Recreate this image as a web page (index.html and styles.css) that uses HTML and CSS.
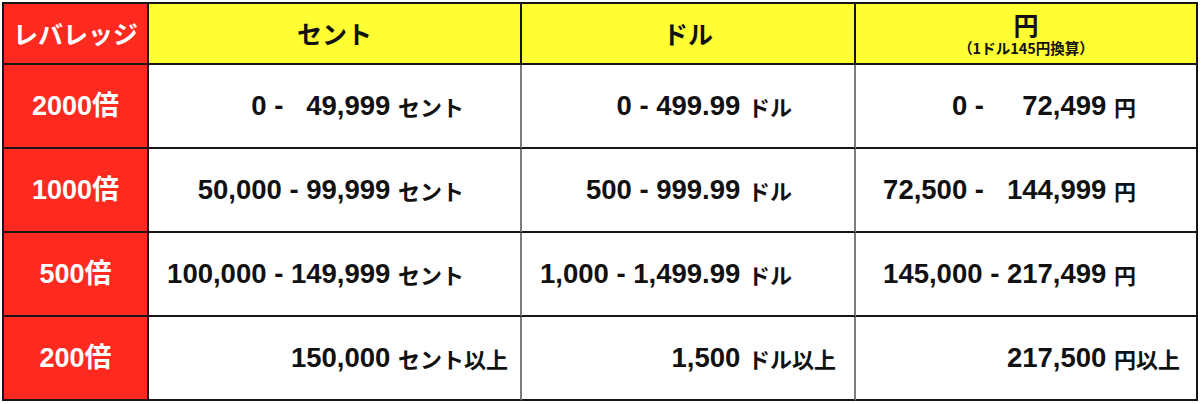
FILE: index.html
```html
<!DOCTYPE html>
<html lang="ja">
<head>
<meta charset="utf-8">
<title>レバレッジ</title>
<link rel="stylesheet" href="styles.css">
</head>
<body>
<div class="sheet">
  <div class="cell head lev">レバレッジ</div>
  <div class="cell head">セント</div>
  <div class="cell head">ドル</div>
  <div class="cell head yen-head"><span class="yen-title">円</span><span class="yen-sub">（1ドル145円換算）</span></div>

  <div class="cell lev">2000倍</div>
  <div class="cell val c-cent">0 -   49,999 <span class="unit">セント　　</span></div>
  <div class="cell val c-usd">0 - 499.99 <span class="unit">ドル　　</span></div>
  <div class="cell val c-jpy">0 -     72,499 <span class="unit">円　　</span></div>

  <div class="cell lev">1000倍</div>
  <div class="cell val c-cent">50,000 - 99,999 <span class="unit">セント　　</span></div>
  <div class="cell val c-usd">500 - 999.99 <span class="unit">ドル　　</span></div>
  <div class="cell val c-jpy">72,500 -   144,999 <span class="unit">円　　</span></div>

  <div class="cell lev">500倍</div>
  <div class="cell val c-cent">100,000 - 149,999 <span class="unit">セント　　</span></div>
  <div class="cell val c-usd">1,000 - 1,499.99 <span class="unit">ドル　　</span></div>
  <div class="cell val c-jpy">145,000 - 217,499 <span class="unit">円　　</span></div>

  <div class="cell lev">200倍</div>
  <div class="cell val c-cent">150,000 <span class="unit">セント以上</span></div>
  <div class="cell val c-usd">1,500 <span class="unit">ドル以上</span></div>
  <div class="cell val c-jpy">217,500 <span class="unit">円以上</span></div>
</div>
</body>
</html>
```

FILE: styles.css
```css
html, body {
  margin: 0;
  padding: 0;
  background: #ffffff;
}

body {
  padding: 2px;
  font-family: "Liberation Sans", "Noto Sans CJK JP", Arial, sans-serif;
  font-weight: bold;
  color: #111111;
}

.sheet {
  display: grid;
  grid-template-columns: 145px 373px 334px 342px;
  grid-template-rows: 61px repeat(4, 84px);
  width: 1194px;
  border-top: 2px solid #161616;
  border-left: 2px solid #161616;
}

.cell {
  box-sizing: border-box;
  border-right: 2px solid #161616;
  border-bottom: 2px solid #161616;
  display: flex;
  align-items: center;
  justify-content: center;
  white-space: pre;
}

.head {
  background: #ffff33;
  font-family: "Noto Sans CJK JP", "Liberation Sans", sans-serif;
  font-size: 25px;
  line-height: 1;
}

.lev {
  background: #ff2a1f;
  color: #ffffff;
  font-size: 27px;
  line-height: 1;
}

.head.lev {
  font-size: 25px;
}

.yen-head {
  flex-direction: column;
  gap: 4px;
}

.yen-title {
  font-size: 25px;
  line-height: 25px;
}

.yen-sub {
  font-size: 14.5px;
  line-height: 14px;
}

.val {
  justify-content: flex-end;
  font-size: 27.5px;
  line-height: 1;
}

.c-cent,
.c-usd {
  border-right-color: #7d7d7d;
}

.c-cent { padding-right: 12px; }
.c-usd { padding-right: 18px; }
.c-jpy { padding-right: 16px; }

.unit {
  font-family: "Noto Sans CJK JP", sans-serif;
  font-size: 22px;
}
```
